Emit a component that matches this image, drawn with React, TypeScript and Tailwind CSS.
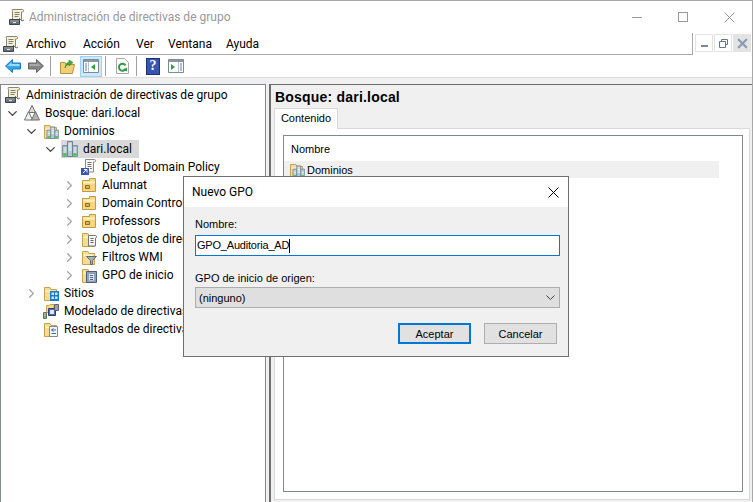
import { ChevronDown, ChevronRight, X } from 'lucide-react'

const ui = { fontFamily: 'Roboto, sans-serif' }
const classic = { fontFamily: '"Liberation Sans", sans-serif' }

// GPMC scroll with little box
const ScrollIcon = () => (
  <svg width="16" height="16" viewBox="0 0 16 16" className="shrink-0">
    <path d="M3.500 0.500h10c1.500 0 1.500 2.500 0 2.500h-1v7.500h-9V3C3.500 2 2.500 0.500 3.500 0.500z" fill="#f6f0d2" stroke="#8a8470" />
    <path d="M5.500 3.500h5M5.500 5.500h5M5.500 7.500h4" stroke="#7d7e74" />
    <path d="M0.500 10.500h10v5h-10z" fill="#66727a" stroke="#3d454a" />
    <path d="M1 12h9" stroke="#98a4ab" />
    <path d="M4 13.500h3" stroke="#e4e8ea" />
    <path d="M10 9l3 3 2-1" stroke="#6d6d6d" fill="none" />
  </svg>
)

const ForestIcon = () => (
  <svg width="16" height="16" viewBox="0 0 16 16" className="shrink-0">
    <path d="M8 0.500l3.500 7h-7z" fill="#dcdcdc" stroke="#6f7072" />
    <path d="M4.500 6.500l4 8.500h-8z" fill="#f0f0f0" stroke="#6f7072" />
    <path d="M11.500 6.500l4 8.500h-8z" fill="#b4b4b4" stroke="#6f7072" />
  </svg>
)

const Servers = () => (
  <g>
    <path d="M0.500 4.500h5v11h-5zM10.500 4.500h5v11h-5z" fill="#9db5c2" stroke="#7d94a2" />
    <path d="M5.500 0.500h5v15h-5z" fill="#b3c8d2" stroke="#6b8392" />
    <path d="M6.500 3h3M6.500 5h3M6.500 7h3M6.500 9h3M1.500 7h3M11.500 7h3M1.500 9h3M11.500 9h3M1.500 11h3M11.500 11h3" stroke="#ffffff" />
    <path d="M1.500 13.500h3M11.500 13.500h3" stroke="#2fd024" strokeWidth="2" />
  </g>
)

const FolderBase = ({ children }: { children?: React.ReactNode }) => (
  <svg width="16" height="16" viewBox="0 0 16 16" className="shrink-0">
    <path d="M1.500 2.500V15.500H13.500V4.500H8L7 2.500z" fill="#f6dc92" stroke="#c8a24e" />
    <path d="M2.500 5.500h10V7h-10z" fill="#fff3cc" />
    {children}
  </svg>
)

const DomainsFolder = () => (
  <FolderBase>
    <g transform="translate(3.500 3.500) scale(0.78)"><Servers /></g>
  </FolderBase>
)

const OuIcon = () => (
  <svg width="16" height="16" viewBox="0 0 16 16" className="shrink-0">
    <path d="M1.500 3.500V14.500H14.500V1.500H8.500V3.500z" fill="#f6d67e" stroke="#c09a45" />
    <path d="M2 4.500h12v2H2z" fill="#fdf0c4" />
    <path d="M4.500 8.500h4v3h-4z" fill="#dcb654" stroke="#8c6d28" />
  </svg>
)

const DomainIcon = () => (
  <svg width="16" height="16" viewBox="0 0 16 16" className="shrink-0"><Servers /></svg>
)

const PolicyLink = () => (
  <svg width="16" height="16" viewBox="0 0 16 16" className="shrink-0">
    <path d="M4.500 0.500h9c1.500 0 1.500 2.500 0 2.500h-1v10h-8z" fill="#f7f7f4" stroke="#8b8b85" />
    <path d="M6.500 3.500h4M6.500 5.500h4M6.500 7.500h4M9 9.500h2" stroke="#6f7378" />
    <path d="M0 9h8v7H0z" fill="#3e55b0" />
    <path d="M2 14l3.500-3.500M3 10.500h3v3" stroke="#fff" fill="none" />
  </svg>
)

const GpoFolder = () => (
  <FolderBase>
    <path d="M7.500 4.500h7c1.500 0 1.500 2.500 0 2.500v8h-7z" fill="#f5f5f2" stroke="#777" />
    <path d="M9.500 7.500h3M9.500 9.500h3M9.500 11.500h3" stroke="#666" />
  </FolderBase>
)

const WmiFolder = () => (
  <FolderBase>
    <path d="M5.500 7.500h10l-4 4V15.500h-2v-4z" fill="#a8b2bc" stroke="#5f6a74" />
  </FolderBase>
)

const StarterFolder = () => (
  <FolderBase>
    <path d="M5.500 4.500h10v11h-10z" fill="#8ea2bd" stroke="#4d6076" />
    <path d="M8 7h5v6.500H8z" fill="#dfe7f0" />
    <path d="M9 8.500h3M9 10.500h3M9 12.500h3" stroke="#4d6076" />
  </FolderBase>
)

const SitesFolder = () => (
  <FolderBase>
    <path d="M7 6h9v10H7z" fill="#1f78c8" />
    <path d="M8.500 7.500h2.500v2.500H8.500zM12 7.500h2.500v2.500H12zM8.500 11.500h2.500v2.500H8.500zM12 11.500h2.500v2.500H12z" fill="#cfe6f8" />
  </FolderBase>
)

const ModelingIcon = () => (
  <svg width="16" height="16" viewBox="0 0 16 16" className="shrink-0">
    <path d="M3.500 2.500V9.500H11V1.500H7L6 2.500z" fill="#f4d98c" stroke="#c8a24e" />
    <path d="M5.500 5.500h7v7h-7z" fill="#4d6bb5" stroke="#2f3f75" />
    <path d="M7 7h4v4H7z" fill="#dfe7f0" />
    <path d="M11.500 1.500h4v6h-4z" fill="#9aa2aa" stroke="#5c6268" />
    <path d="M0.500 9.500h3v6h-3z" fill="#a7b0a0" stroke="#6a7068" />
    <path d="M1 14h2" stroke="#35c42c" />
  </svg>
)

const ResultsIcon = () => (
  <FolderBase>
    <path d="M6.500 5.500h8v10h-8z" fill="#f4f5f7" stroke="#808890" />
    <path d="M13 9H8.500M8.500 9l2-1.500M8.500 9l2 1.500M8.500 12.500H13" stroke="#3c6aa8" fill="none" />
  </FolderBase>
)

const BackArrow = () => (
  <svg width="16" height="14" viewBox="0 0 16 14">
    <path d="M7.500 0.500L0.500 7l7 6.500V10H15.500V4H7.500z" fill="#35a5ea" stroke="#1c78c0" />
    <path d="M2.500 7l4-3.500V5H14.500V7H3z" fill="#9fdcfb" />
  </svg>
)

const ForwardArrow = () => (
  <svg width="16" height="14" viewBox="0 0 16 14">
    <path d="M8.500 0.500L15.500 7l-7 6.500V10H0.500V4H8.500z" fill="#848484" stroke="#666" />
    <path d="M1.500 5H9V3.500L13 7H1.500z" fill="#a8a8a8" />
  </svg>
)

const UpFolder = () => (
  <svg width="15" height="16" viewBox="0 0 15 16">
    <path d="M0.500 4.500V15.500H12.500L14.500 6.500H6L5 4.500z" fill="#f1cf76" stroke="#b99440" />
    <path d="M5 10C5.500 6 7 4.500 9 4V2l4 2.500L9 8V6C7.500 6.500 6 7.500 5 10z" fill="#42ad3a" stroke="#2b8426" strokeWidth="0.600" />
  </svg>
)

const PaneIcon = () => (
  <svg width="16" height="14" viewBox="0 0 16 14">
    <path d="M0.500 0.500h15v13H0.500z" fill="#fff" stroke="#7c8a92" />
    <path d="M1 1h14v2H1z" fill="#8c989f" />
    <path d="M10.500 3v10" stroke="#b8c2c8" />
    <path d="M12 5h2M12 7h2M12 9h2M12 11h2" stroke="#4f86b8" />
    <path d="M3 5v6l4-3z" fill="#2ca03a" />
  </svg>
)

const PaneBackIcon = () => (
  <svg width="16" height="14" viewBox="0 0 16 14">
    <path d="M0.500 0.500h15v13H0.500z" fill="#fff" stroke="#7c8a92" />
    <path d="M1 1h14v2H1z" fill="#8c989f" />
    <path d="M5.500 3v10" stroke="#b8c2c8" />
    <path d="M2 5h2M2 7h2M2 9h2M2 11h2" stroke="#4f86b8" />
    <path d="M12 5v6L8 8z" fill="#2ca03a" />
  </svg>
)

const RefreshIcon = () => (
  <svg width="13" height="16" viewBox="0 0 13 16">
    <path d="M0.500 0.500h8l4 4v11H0.500z" fill="#fff" stroke="#a8a8a8" />
    <path d="M9.500 7.500A3.500 3.500 0 1 0 9.500 11" fill="none" stroke="#2f9e44" strokeWidth="2" />
    <path d="M7 11.500l4 2v-4z" fill="#2f9e44" />
  </svg>
)

const HelpIcon = () => (
  <div className="w-[14px] h-[17px] bg-[#3555b0] border border-[#1f2f70] flex items-center justify-center text-white text-[14px] font-bold leading-none" style={{ fontFamily: '"Liberation Serif", serif' }}>?</div>
)

const Cross = ({ color }: { color: string }) => (
  <svg width="11" height="11" viewBox="0 0 11 11" className="shrink-0">
    <path d="M0.500 0.500L10.500 10.500M10.500 0.500L0.500 10.500" stroke={color} fill="none" />
  </svg>
)

const Sep = () => <div className="w-px h-[20px] bg-[#a0a0a0] shrink-0" />

interface TreeNode {
  label: string
  icon: React.ReactNode
  pad: string
  arrow?: 'open' | 'closed'
  selected?: boolean
}

const nodes: TreeNode[] = [
  { label: 'Administración de directivas de grupo', icon: <ScrollIcon />, pad: 'pl-[3px]' },
  { label: 'Bosque: dari.local', icon: <ForestIcon />, pad: 'pl-[4px]', arrow: 'open' },
  { label: 'Dominios', icon: <DomainsFolder />, pad: 'pl-[23px]', arrow: 'open' },
  { label: 'dari.local', icon: <DomainIcon />, pad: 'pl-[42px]', arrow: 'open', selected: true },
  { label: 'Default Domain Policy', icon: <PolicyLink />, pad: 'pl-[79px]' },
  { label: 'Alumnat', icon: <OuIcon />, pad: 'pl-[61px]', arrow: 'closed' },
  { label: 'Domain Controllers', icon: <OuIcon />, pad: 'pl-[61px]', arrow: 'closed' },
  { label: 'Professors', icon: <OuIcon />, pad: 'pl-[61px]', arrow: 'closed' },
  { label: 'Objetos de directiva de grupo', icon: <GpoFolder />, pad: 'pl-[61px]', arrow: 'closed' },
  { label: 'Filtros WMI', icon: <WmiFolder />, pad: 'pl-[61px]', arrow: 'closed' },
  { label: 'GPO de inicio', icon: <StarterFolder />, pad: 'pl-[61px]', arrow: 'closed' },
  { label: 'Sitios', icon: <SitesFolder />, pad: 'pl-[23px]', arrow: 'closed' },
  { label: 'Modelado de directivas de grupo', icon: <ModelingIcon />, pad: 'pl-[41px]' },
  { label: 'Resultados de directivas de grupo', icon: <ResultsIcon />, pad: 'pl-[41px]' },
]

const TreeRow = ({ node }: { node: TreeNode }) => (
  <div className={`h-[18px] flex items-center whitespace-nowrap ${node.pad}`}>
    {node.arrow === 'open' && <ChevronDown size={15} strokeWidth={2} className="shrink-0 text-[#404040]" />}
    {node.arrow === 'closed' && <ChevronRight size={15} strokeWidth={2} className="shrink-0 text-[#a6a6a6]" />}
    <div className={`flex items-center h-[18px] gap-[5px] ${node.selected ? 'bg-[#d9d9d9] pr-[7px] pl-[1px]' : 'pl-[1px]'} ${node.arrow ? 'ml-[3px]' : ''}`}>
      {node.icon}
      <span className="text-[12px] text-black leading-none">{node.label}</span>
    </div>
  </div>
)

export default function App() {
  return (
    <div className="w-[753px] h-[502px] overflow-hidden relative flex flex-col bg-white border-r border-t border-[#a8a8a8]" style={ui}>
      {/* title bar */}
      <div className="h-[32px] shrink-0 flex items-center pl-[9px]">
        <ScrollIcon />
        <span className="ml-[4px] text-[12px] text-[#999999]">Administración de directivas de grupo</span>
        <div className="ml-auto flex items-center">
          <div className="w-[46px] flex justify-center"><div className="w-[10px] h-px bg-[#999999]" /></div>
          <div className="w-[46px] flex justify-center"><div className="w-[10px] h-[10px] border border-[#999999]" /></div>
          <div className="w-[46px] flex justify-center"><Cross color="#999999" /></div>
        </div>
      </div>
      {/* menu bar */}
      <div className="h-[22px] shrink-0 flex">
        <div className="w-[693px] flex items-center pl-[3px] border-b border-r border-[#a8a8a8] text-[12px] text-black">
          <ScrollIcon />
          <span className="ml-[7px] w-[57px]">Archivo</span>
          <span className="w-[53px]">Acción</span>
          <span className="w-[32px]">Ver</span>
          <span className="w-[58px]">Ventana</span>
          <span>Ayuda</span>
        </div>
        <div className="flex items-start gap-px pl-[2px] pt-[1px]">
          <div className="w-[18px] h-[18px] border border-[#e3e3e3] flex items-end justify-center pb-[4px]"><div className="w-[7px] h-[2px] bg-[#7a8a9c]" /></div>
          <div className="w-[18px] h-[18px] border border-[#e3e3e3] flex items-center justify-center">
            <svg width="9" height="9" viewBox="0 0 9 9"><path d="M2.500 2V.5h6v5H7M.5 2.500h6v6h-6z" fill="none" stroke="#66778a" /></svg>
          </div>
          <div className="w-[18px] h-[18px] bg-[#e3e3e3] flex items-center justify-center">
            <X size={15} strokeWidth={3.500} className="text-[#8a9bb0]" />
          </div>
        </div>
      </div>
      {/* toolbar */}
      <div className="h-[23px] shrink-0 flex items-center pl-[5px] border-b border-[#dcdcdc]">
        <BackArrow />
        <div className="w-[7px]" />
        <ForwardArrow />
        <div className="w-[6px]" />
        <Sep />
        <div className="w-[9px]" />
        <UpFolder />
        <div className="w-[5px]" />
        <div className="w-[22px] h-[21px] bg-[#cce8ff] border border-[#99d1ff] flex items-center justify-center"><PaneBackIcon /></div>
        <div className="w-[3px]" />
        <Sep />
        <div className="w-[10px]" />
        <RefreshIcon />
        <div className="w-[7px]" />
        <Sep />
        <div className="w-[9px]" />
        <HelpIcon />
        <div className="w-[8px]" />
        <PaneIcon />
      </div>
      <div className="h-[6px] shrink-0 bg-[#f0f0f0]" />
      {/* panes */}
      <div className="flex-1 flex min-h-0 bg-[#f0f0f0]">
        <div className="w-[266px] shrink-0 bg-white border-l border-t border-r border-[#828790] overflow-hidden pt-[1px]">
          {nodes.map((node) => <TreeRow key={node.label} node={node} />)}
        </div>
        <div className="w-[3px] shrink-0" />
        <div className="flex-1 min-w-0 flex flex-col border-l-2 border-t border-[#6d6d6d] pl-[3px] pr-[2px] pb-[2px]">
          <div className="h-[23px] shrink-0 flex items-center text-[14px] font-bold text-black pl-[1px] pt-[2px] tracking-[0.2px]" style={classic}>Bosque: dari.local</div>
          <div className="h-[21px] shrink-0 flex items-end">
            <div className="w-[64px] h-[21px] bg-white border border-b-0 border-[#d9d9d9] flex items-center justify-center text-[11px] text-black pb-[2px]" style={classic}>Contenido</div>
            <div className="flex-1 border-b border-[#d9d9d9]" />
          </div>
          <div className="flex-1 min-h-0 bg-white border-l border-r border-b border-[#d9d9d9] pt-[6px] pl-[8px] pr-[6px] pb-[7px]">
            <div className="h-full border border-[#828790] bg-white text-[11px] text-black" style={classic}>
              <div className="h-[25px] flex items-center pl-[7px] pt-[1px]">Nombre</div>
              <div className="w-[435px] h-[17px] flex items-center gap-[2px] pl-[5px] bg-[#f0f0f0]"><DomainsFolder /><span className="pt-[1px]">Dominios</span></div>
            </div>
          </div>
        </div>
      </div>
      {/* dialog */}
      <div className="absolute left-[183px] top-[175px] w-[386px] h-[181px] border border-[#6f6f6f] bg-[#f0f0f0] flex flex-col" style={classic}>
        <div className="h-[30px] shrink-0 bg-white flex items-center pl-[8px] pr-[9px] text-[12px] text-black">
          <span style={ui}>Nuevo GPO</span>
          <span className="ml-auto"><Cross color="#000000" /></span>
        </div>
        <div className="flex-1 flex flex-col pl-[11px] pr-[8px] text-[11px] text-black">
          <div className="mt-[10px] h-[14px] leading-[14px]">Nombre:</div>
          <div className="mt-[4px] h-[21px] bg-white border border-[#0078d7] flex items-center pl-[1px] tracking-[-0.2px]">
            GPO_Auditoria_AD<span className="w-px h-[14px] bg-black" />
          </div>
          <div className="mt-[15px] h-[14px] leading-[14px]">GPO de inicio de origen:</div>
          <div className="mt-[2px] h-[21px] bg-[#dfdfdf] border border-[#adadad] flex items-center pl-[3px] pr-[4px]">
            <span className="pt-[1px]">(ninguno)</span>
            <svg width="9" height="5" viewBox="0 0 9 5" className="ml-auto"><path d="M0.500 0.500L4.500 4.500L8.500 0.500" fill="none" stroke="#404040" /></svg>
          </div>
          <div className="mt-[15px] flex justify-end gap-[13px] pr-[3px]">
            <div className="w-[73px] h-[21px] bg-[#e1e1e1] border-2 border-[#0078d7] flex items-center justify-center pt-[1px]">Aceptar</div>
            <div className="w-[73px] h-[21px] bg-[#e1e1e1] border border-[#adadad] flex items-center justify-center pt-[1px]">Cancelar</div>
          </div>
        </div>
      </div>
    </div>
  )
}
